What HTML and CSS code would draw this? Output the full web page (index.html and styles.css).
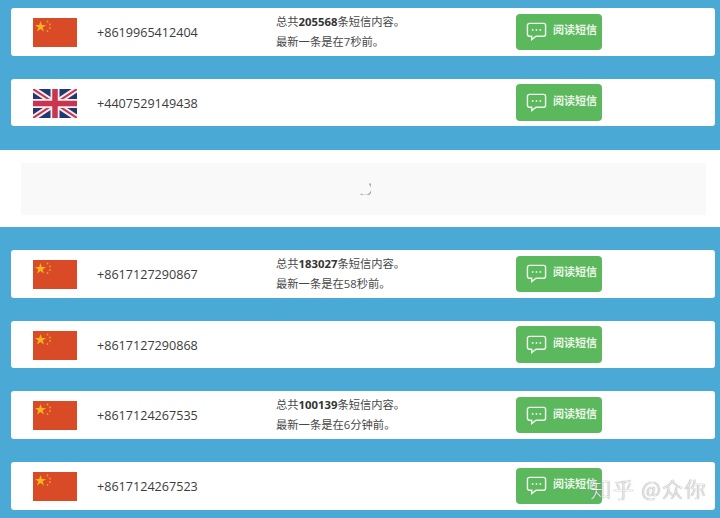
FILE: index.html
```html
<!DOCTYPE html>
<html lang="zh">
<head>
<meta charset="utf-8">
<title>短信</title>
<link rel="stylesheet" href="styles.css">
</head>
<body>
<svg class="defs" width="0" height="0" aria-hidden="true">
  <defs>
    <symbol id="cn" viewBox="0 0 44 29">
      <rect width="44" height="29" fill="#d94a26"/>
      <polygon fill="#f6b31f" points="7.500,3 8.900,7 13,7 9.700,9.500 11,13.500 7.500,11 4,13.500 5.300,9.500 2,7 6.100,7"/>
      <circle cx="14.500" cy="3.500" r="0.900" fill="#eaa024"/>
      <circle cx="17" cy="6.500" r="0.900" fill="#eaa024"/>
      <circle cx="17" cy="10" r="0.900" fill="#eaa024"/>
      <circle cx="14.500" cy="13" r="0.900" fill="#eaa024"/>
    </symbol>
    <symbol id="gb" viewBox="0 0 44 29">
      <rect width="44" height="29" fill="#24386f"/>
      <path d="M0 0 44 29M44 0 0 29" stroke="#f4eef0" stroke-width="6"/>
      <path d="M0 0 44 29M44 0 0 29" stroke="#c9354f" stroke-width="2"/>
      <path d="M22 0V29M0 14.500H44" stroke="#f4eef0" stroke-width="9"/>
      <path d="M22 0V29M0 14.500H44" stroke="#c9354f" stroke-width="5.500"/>
    </symbol>
    <symbol id="msg" viewBox="0 0 22 22">
      <path d="M3.500 2.500H18.500A2 2 0 0 1 20.500 4.500V14A2 2 0 0 1 18.500 16H10.500L6 19.500V16H3.500A2 2 0 0 1 1.500 14V4.500A2 2 0 0 1 3.500 2.500Z" fill="none" stroke="#f1f8f0" stroke-width="1.500"/>
      <circle cx="7" cy="9.300" r="1" fill="#f1f8f0"/>
      <circle cx="11" cy="9.300" r="1" fill="#f1f8f0"/>
      <circle cx="15" cy="9.300" r="1" fill="#f1f8f0"/>
    </symbol>
  </defs>
</svg>

<section class="band band-first">
  <article class="row">
    <svg class="flag"><use href="#cn"/></svg>
    <span class="phone">+8619965412404</span>
    <div class="info"><p>总共<b>205568</b>条短信内容。</p><p>最新一条是在7秒前。</p></div>
    <a class="btn"><svg class="btn-icon"><use href="#msg"/></svg><span class="btn-label">阅读短信</span></a>
  </article>
  <article class="row">
    <svg class="flag"><use href="#gb"/></svg>
    <span class="phone">+4407529149438</span>
    <div class="info"></div>
    <a class="btn"><svg class="btn-icon"><use href="#msg"/></svg><span class="btn-label">阅读短信</span></a>
  </article>
</section>

<section class="ad">
  <div class="ad-box">
    <svg class="spinner" viewBox="0 0 12 12"><path d="M10.500 1.500A5.500 5.500 0 0 1 2.500 11" fill="none" stroke="#a8a8a8" stroke-width="1.300"/></svg>
  </div>
</section>

<section class="band">
  <article class="row">
    <svg class="flag"><use href="#cn"/></svg>
    <span class="phone">+8617127290867</span>
    <div class="info"><p>总共<b>183027</b>条短信内容。</p><p>最新一条是在58秒前。</p></div>
    <a class="btn"><svg class="btn-icon"><use href="#msg"/></svg><span class="btn-label">阅读短信</span></a>
  </article>
  <article class="row">
    <svg class="flag"><use href="#cn"/></svg>
    <span class="phone">+8617127290868</span>
    <div class="info"></div>
    <a class="btn"><svg class="btn-icon"><use href="#msg"/></svg><span class="btn-label">阅读短信</span></a>
  </article>
  <article class="row">
    <svg class="flag"><use href="#cn"/></svg>
    <span class="phone">+8617124267535</span>
    <div class="info"><p>总共<b>100139</b>条短信内容。</p><p>最新一条是在6分钟前。</p></div>
    <a class="btn"><svg class="btn-icon"><use href="#msg"/></svg><span class="btn-label">阅读短信</span></a>
  </article>
  <article class="row">
    <svg class="flag"><use href="#cn"/></svg>
    <span class="phone">+8617124267523</span>
    <div class="info"></div>
    <a class="btn"><svg class="btn-icon"><use href="#msg"/></svg><span class="btn-label">阅读短信</span></a>
  </article>
</section>

<div class="watermark">知乎 @众你</div>
</body>
</html>
```

FILE: styles.css
```css
html, body {
  margin: 0;
  height: 518px;
  overflow: hidden;
}

body {
  position: relative;
  background: #4aa9d5;
  font-family: "Open Sans", "Noto Sans CJK SC", sans-serif;
  color: #444;
}

.defs {
  display: block;
  height: 0;
}

.band {
  display: flex;
  flex-direction: column;
  gap: 23px;
  padding: 23px 5px 23px 11px;
}

.band-first {
  padding-top: 8px;
  padding-bottom: 23.600px;
}

.row {
  display: flex;
  align-items: center;
  height: 47.700px;
  background: #fff;
  border-radius: 3px;
  padding-left: 22px;
}

.flag {
  flex: none;
  width: 44px;
  height: 29px;
  margin-top: 1px;
}

.phone {
  flex: none;
  width: 179px;
  margin-top: 1px;
  margin-left: 20px;
  font-size: 12.600px;
  color: #3c3c3c;
}

.info {
  flex: none;
  width: 240px;
  font-size: 11.300px;
  line-height: 20px;
  color: #484848;
}

.info p {
  margin: 0;
}

.info b {
  font-weight: 700;
  color: #333;
}

.btn {
  flex: none;
  display: flex;
  align-items: center;
  box-sizing: border-box;
  width: 86px;
  height: 36.500px;
  padding-left: 10px;
  background: #5cb85c;
  border-radius: 4px;
  color: #e9f5e8;
  font-size: 11px;
  font-weight: 700;
}

.btn-icon {
  flex: none;
  width: 21px;
  height: 21px;
}

.btn-label {
  margin-left: 6px;
  margin-bottom: 5px;
}

.ad {
  background: #fff;
  padding: 13px 14px 12px 21px;
}

.ad-box {
  display: flex;
  align-items: center;
  justify-content: center;
  height: 52px;
  background: #f9f9f9;
}

.spinner {
  width: 13px;
  height: 13px;
  margin-left: 2px;
}

.watermark {
  position: absolute;
  right: 13px;
  bottom: 18px;
  font-family: "Noto Sans CJK SC", sans-serif;
  font-size: 21px;
  font-weight: 300;
  letter-spacing: 1.500px;
  line-height: 24px;
  color: rgba(255, 255, 255, .92);
  text-shadow: 0 0 1px #555;
}
```
